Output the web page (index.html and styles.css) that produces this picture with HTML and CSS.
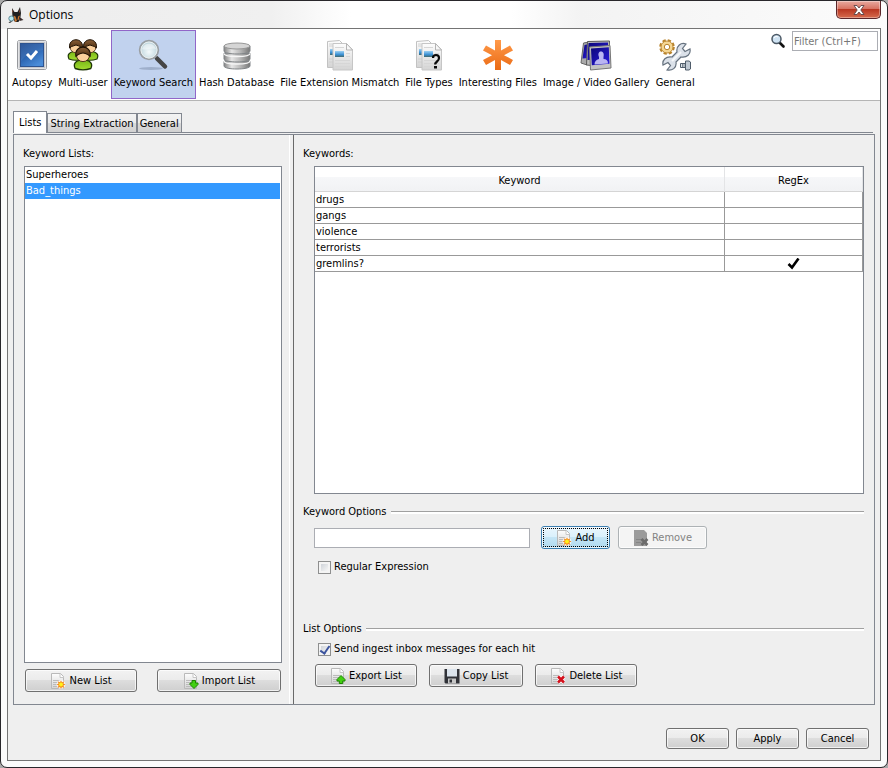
FILE: index.html
```html
<!DOCTYPE html>
<html lang="en">
<head>
  <meta charset="UTF-8" />
  <meta name="viewport" content="width=device-width, initial-scale=1.0" />
  <title>Options</title>
  <link rel="stylesheet" href="styles.css">
</head>
<body>
  <!-- shared icons -->
  <svg class="sprite" width="0" height="0" aria-hidden="true">
    <defs>
      <linearGradient id="paper" x1="0" y1="0" x2="0" y2="1">
        <stop offset="0" stop-color="#fdfdfd"/><stop offset="1" stop-color="#d4d4d4"/>
      </linearGradient>
      <linearGradient id="metal" x1="0" y1="0" x2="1" y2="0">
        <stop offset="0" stop-color="#858585"/><stop offset="0.3" stop-color="#e6e6e6"/><stop offset="0.6" stop-color="#bcbcbc"/><stop offset="1" stop-color="#777"/>
      </linearGradient>
      <linearGradient id="sky" x1="0" y1="0" x2="0" y2="1">
        <stop offset="0" stop-color="#9cd0f2"/><stop offset="0.6" stop-color="#3b90d4"/><stop offset="1" stop-color="#41686b"/>
      </linearGradient>
      <linearGradient id="blue" x1="0" y1="0" x2="0.6" y2="1">
        <stop offset="0" stop-color="#1d4a91"/><stop offset="0.5" stop-color="#2860ad"/><stop offset="1" stop-color="#4a8cd8"/>
      </linearGradient>
      <linearGradient id="orange" x1="0" y1="0" x2="0" y2="1">
        <stop offset="0" stop-color="#ff9a4a"/><stop offset="1" stop-color="#ea6a14"/>
      </linearGradient>
      <linearGradient id="shirt" x1="0" y1="0" x2="0" y2="1">
        <stop offset="0" stop-color="#78b818"/><stop offset="1" stop-color="#a4dc30"/>
      </linearGradient>
      <linearGradient id="hair" x1="0" y1="0" x2="0" y2="1">
        <stop offset="0" stop-color="#8a6038"/><stop offset="1" stop-color="#4c2d10"/>
      </linearGradient>
      <radialGradient id="lens" cx="0.5" cy="0.6" r="0.6">
        <stop offset="0" stop-color="#f4fafb"/><stop offset="1" stop-color="#b4cfd8"/>
      </radialGradient>
      <linearGradient id="night" x1="0" y1="0" x2="1" y2="1">
        <stop offset="0" stop-color="#0c0878"/><stop offset="1" stop-color="#2a1ae0"/>
      </linearGradient>
    </defs>
    <symbol id="doc" viewBox="0 0 16 16">
      <path d="M1.500 .5h9l3 3v12h-12z" fill="url(#paper)" stroke="#b9b9b9"/>
      <path d="M10 .8v3.700h3.500" fill="#fff" stroke="#c6c6c6"/>
      <path d="M3 7.500h7M3 9.500h8M3 11.500h5M3 13.500h6" stroke="#bbb"/>
    </symbol>
    <symbol id="person" viewBox="0 0 18 22">
      <path d="M2 20C0 16 2 13.500 6 12.500h6c4 1 6 3.500 4 7.500q-7 2.500-14 0z" fill="url(#shirt)" stroke="#1e3606" stroke-width="1.200"/>
      <path d="M6.500 12.500q2.500 3.500 5 0v-2h-5z" fill="#f7c68f"/>
      <ellipse cx="9" cy="8.500" rx="5.800" ry="5.300" fill="#fbd09c" stroke="#3c240c" stroke-width=".8"/>
      <path d="M2.600 9C.8-2 17.200-2 15.400 9l-2-1.500Q9 4.500 4.600 7.500z" fill="url(#hair)" stroke="#1f1204"/>
    </symbol>
    <symbol id="pages" viewBox="0 0 28 32">
      <path d="M1.500 2.500l12-1 4 4v23h-16z" fill="url(#paper)" stroke="#c2c2c2"/>
      <path d="M3 5h11M3 7h11M3 20h5M3 23h5" stroke="#d0d0d0"/>
      <path d="M4 10h4v6H4z" fill="url(#sky)"/>
      <path d="M7 4.500h13.500l6 6v20.500H7z" fill="url(#paper)" stroke="#c6c6c6"/>
      <path d="M20.500 4.500v6.500h6z" fill="#f8f8f8" stroke="#b4b4b4"/>
      <path d="M9 8.500h9M20 14.500h4M20 17.500h4M9 21.500h15M9 24.500h15M9 27.500h15" stroke="#d6d6d6"/>
      <path d="M9 12h9v6H9z" fill="url(#sky)"/>
    </symbol>
    <symbol id="star" viewBox="0 0 16 16">
      <circle cx="11" cy="11.500" r="4.500" fill="#fff" opacity=".7"/>
      <path d="M11 7.200l1 2 2.400-1-1 2.400 2.200 1-2.200 1 1 2.400-2.400-1-1 1.900-1-1.900-2.400 1 1-2.400-2-1 2-1-1-2.400 2.400 1z" fill="#f58b1f"/>
      <circle cx="11" cy="11.600" r="2" fill="#fff11b"/>
    </symbol>
  </svg>

  <div class="window">
    <header class="titlebar">
      <svg class="app-icon" viewBox="0 0 16 16" aria-hidden="true">
        <path d="M4 1l2.500 4h3L12 0l1 6-.5 4-2 5H7L4.500 11z" fill="#202020"/>
        <path d="M4.300 2l1 3-1 .5zM11.800 2l.3 3.500-1.100-.3z" fill="#96533a"/>
        <path d="M5.500 8.500l2 1 1.500 4.500-2 1zM12 8.500l-2 1-.5 3.500 1.500-.5z" fill="#c77632"/>
        <path d="M11 9.500l4.500 3.500-4 1z" fill="#392c2c"/>
        <path d="M5 13L1 16" stroke="#555" stroke-width="1.500"/>
        <circle cx="3.300" cy="11.500" r="2.500" fill="#b9eaf2" stroke="#608a98"/>
      </svg>
      <h1 class="title">Options</h1>
      <button class="close" type="button" aria-label="Close">
        <svg viewBox="0 0 12 10"><path d="M1 .5h3l2 2.500 2-2.500h3L7.800 5 11 9.500H8L6 7 4 9.500H1L4.200 5z" fill="#fff" stroke="#5d4548" stroke-width=".9"/></svg>
      </button>
    </header>

    <main class="content">
      <div class="toolbar">
        <nav class="categories">
          <button class="category" type="button">
            <svg viewBox="0 0 32 32">
              <rect x="1.500" y="1.500" width="29" height="29" rx="2" fill="#c6c8cc" stroke="#96989c"/>
              <rect x="2.500" y="2.500" width="27" height="27" fill="none" stroke="#e2e3e6"/>
              <rect x="4.500" y="4.500" width="23" height="23" fill="url(#blue)" stroke="#2d5390"/>
              <path d="M5 5h22v6Q12 13 5 22z" fill="#fff" opacity=".08"/>
              <path d="M11 15l4 4 6-7" fill="none" stroke="#fff" stroke-width="3"/>
            </svg>
            Autopsy
          </button>
          <button class="category" type="button">
            <svg viewBox="0 0 32 32">
              <use href="#person" x="0" y="0" width="18" height="22"/>
              <use href="#person" x="14" y="0" width="18" height="22"/>
              <use href="#person" x="6" y="7" width="20" height="25"/>
            </svg>
            Multi-user
          </button>
          <button class="category selected" type="button">
            <svg viewBox="0 0 32 32">
              <ellipse cx="14" cy="29.500" rx="12" ry="1.500" fill="#8798b4" opacity=".6"/>
              <path d="M17 17l4 3" stroke="#aaa" stroke-width="3"/>
              <path d="M20 19.500l8 8" stroke="#454545" stroke-width="4.500" stroke-linecap="round"/>
              <circle cx="12" cy="11" r="9.300" fill="url(#lens)" stroke="#9a9fa3" stroke-width="1.800"/>
              <circle cx="12" cy="11" r="8" fill="none" stroke="#e9eeee"/>
              <path d="M5 10c2-7 12-7 14 0-5-2-9 2-14 0z" fill="#fff" opacity=".45"/>
            </svg>
            Keyword Search
          </button>
          <button class="category" type="button">
            <svg viewBox="0 0 32 32">
              <g fill="url(#metal)" stroke="#808487">
                <path d="M3 22v5c0 4 26 4 26 0v-5z"/>
                <path d="M3 14v6c0 4 26 4 26 0v-6z"/>
                <path d="M3 7v5c0 4 26 4 26 0V7z"/>
              </g>
              <ellipse cx="16" cy="7" rx="13" ry="3" fill="#d5d5d5" stroke="#969696"/>
              <path d="M3 14.500c0 4 26 4 26 0M3 22c0 4 26 4 26 0" fill="none" stroke="#f6f6f6" stroke-width="1.400"/>
            </svg>
            Hash Database
          </button>
          <button class="category" type="button">
            <svg viewBox="0 0 32 32"><use href="#pages" x="2" y="0" width="28" height="32"/></svg>
            File Extension Mismatch
          </button>
          <button class="category" type="button">
            <svg viewBox="0 0 32 32">
              <use href="#pages" x="2" y="0" width="28" height="32"/>
              <path d="M20 19q0-3 3-3t3 3q0 2-2 3.500t-1.500 3" fill="none" stroke="#080808" stroke-width="2.200"/>
              <rect x="21" y="27" width="3" height="2.500" fill="#080808"/>
            </svg>
            File Types
          </button>
          <button class="category" type="button">
            <svg viewBox="0 0 32 32">
              <path d="M13 1h6v10.500L28 6.500l3 5-9 4.700 9 4.700-3 5-9-5V31h-6V20.900l-9 5-3-5 9-4.700-9-4.700 3-5 9 5z" fill="url(#orange)"/>
            </svg>
            Interesting Files
          </button>
          <button class="category" type="button">
            <svg viewBox="0 0 32 32">
              <path d="M3.500 4L9 3 7 26l-6-2z" fill="#aaa" stroke="#666"/>
              <path d="M4.500 6L9 5v14l-6.500.5z" fill="url(#night)"/>
              <path d="M7.500 2.500l22-.5-1 26-22-2z" fill="#bdbdbd" stroke="#5b5b5b"/>
              <path d="M8.500 4l19.500-.5V20L7.500 21z" fill="url(#night)"/>
              <path d="M9.500 8l20.500-1.500L31 29l-20.500 2z" fill="#c3c3c3" stroke="#777"/>
              <path d="M11 9.500l17.800-1.300.7 16.500-17.700 1.500z" fill="url(#night)"/>
              <path d="M14.500 25.500q0-4.500 4.500-5.500v-2c-3-7 6.500-7.500 4.500 0v2q4.500 0 4.500 4.500z" fill="#b9b5f2"/>
            </svg>
            Image / Video Gallery
          </button>
          <button class="category" type="button">
            <svg viewBox="0 0 32 32">
              <circle cx="8" cy="8" r="6.500" fill="none" stroke="#b8832b" stroke-width="2.600" stroke-dasharray="3.100 2"/>
              <circle cx="8" cy="8" r="6" fill="#f5d794" stroke="#c18d38"/>
              <circle cx="8" cy="8" r="2.700" fill="#fff" stroke="#b8832b"/>
              <path d="M18 13c-1-6 4-10 9-8l-3.500 4.500 2.500 3L31 10c1 5-3 9-9 8l-5 5c1 6-4 9-9 8l3.500-4.500-2.500-3L4 26c-1-5 3-9 9-8z" fill="#dbe1e9" stroke="#66727f" stroke-width="1.200"/>
              <path d="M13 22l9-9" stroke="#f6f8fa" stroke-width="2"/>
              <path d="M21.500 24.500h5v4h-5z" fill="#dfe5ea" stroke="#4f5c6a"/>
              <path d="M26.500 22h3.500l1.500 1v7l-1.500 1h-3.500z" fill="#c0cad4" stroke="#4f5c6a"/>
              <path d="M23.500 25v3M25 25v3" stroke="#4f5c6a" stroke-width=".7"/>
            </svg>
            General
          </button>
        </nav>
        <div class="filter">
          <svg viewBox="0 0 16 16" aria-hidden="true">
            <path d="M9 9l4.500 4.500" stroke="#111" stroke-width="2.600" stroke-linecap="round"/>
            <circle cx="6.500" cy="6" r="4.500" fill="#cfe3f3" stroke="#4b5865" stroke-width="1.500"/>
            <path d="M4 5q2-3 4-1" stroke="#fff" fill="none"/>
          </svg>
          <input type="text" placeholder="Filter (Ctrl+F)" aria-label="Filter">
        </div>
      </div>

      <div class="tabs">
        <button class="tab active" type="button">Lists</button>
        <button class="tab" type="button">String Extraction</button>
        <button class="tab" type="button">General</button>
      </div>

      <div class="panel">
        <section class="lists-pane">
          <h2 id="lists-label">Keyword Lists:</h2>
          <ul class="keyword-lists" aria-labelledby="lists-label">
            <li>Superheroes</li>
            <li class="current">Bad_things</li>
          </ul>
          <div class="list-buttons">
            <button class="btn new-list" type="button">
              <svg viewBox="0 0 16 16"><use href="#doc"/><use href="#star"/></svg>New List
            </button>
            <button class="btn import-list" type="button">
              <svg viewBox="0 0 16 16"><use href="#doc"/><path d="M9 7.500h3.500V10H15v1.500L11 15.500 7 11.500V10h2z" fill="#43cf12" stroke="#1c8500"/></svg>Import List
            </button>
          </div>
        </section>

        <section class="keywords-pane">
          <h2>Keywords:</h2>
          <div class="table-wrap">
            <table>
              <thead>
                <tr><th>Keyword</th><th class="regex">RegEx</th></tr>
              </thead>
              <tbody>
                <tr><td>drugs</td><td></td></tr>
                <tr><td>gangs</td><td></td></tr>
                <tr><td>violence</td><td></td></tr>
                <tr><td>terrorists</td><td></td></tr>
                <tr>
                  <td>gremlins?</td>
                  <td class="mark"><svg viewBox="0 0 14 12" role="img" aria-label="Yes"><path d="M1.500 6l3.500 3.500 6.500-9" fill="none" stroke="#000" stroke-width="2.600"/></svg></td>
                </tr>
              </tbody>
            </table>
          </div>

          <h2 class="divider">Keyword Options</h2>
          <div class="add-row">
            <input class="keyword-input" type="text" aria-label="Keyword">
            <button class="btn add" type="button">
              <svg viewBox="0 0 16 16"><use href="#doc"/><use href="#star"/></svg>Add
            </button>
            <button class="btn remove" type="button" disabled>
              <svg viewBox="0 0 16 16"><path d="M1 0h10l3 3v13H1z" fill="#9b9b9b"/><path d="M3 9.500h6M3 12.500h5" stroke="#858585"/><path d="M8.500 9l6 6M14.500 9l-6 6" stroke="#6c6c6c" stroke-width="2.600"/></svg>Remove
            </button>
          </div>
          <label class="check"><input type="checkbox">Regular Expression</label>

          <h2 class="divider list-options">List Options</h2>
          <label class="check inbox-check"><input type="checkbox" checked>Send ingest inbox messages for each hit</label>
          <div class="action-row">
            <button class="btn" type="button">
              <svg viewBox="0 0 16 16"><use href="#doc"/><path d="M11 7.500l4 4V13h-2.300v2.500H9.300V13H7v-1.500z" fill="#43cf12" stroke="#1c8500"/></svg>Export List
            </button>
            <button class="btn" type="button">
              <svg viewBox="0 0 16 16"><path d="M.5 1h15v14.500h-14l-1-1z" fill="#303238"/><path d="M3 1h10v7.500H3z" fill="#dbe3ec"/><path d="M4 10.500h8v5H4z" fill="#c6c6c6"/><path d="M5.500 11.500h2.500v3H5.500z" fill="#303238"/></svg>Copy List
            </button>
            <button class="btn" type="button">
              <svg viewBox="0 0 16 16"><use href="#doc"/><path d="M8 8.500l6 6M14 8.500l-6 6" stroke="#fff" stroke-width="4"/><path d="M8 8.500l6 6M14 8.500l-6 6" stroke="#d3101c" stroke-width="2.600"/></svg>Delete List
            </button>
          </div>
        </section>
      </div>

      <footer class="footer">
        <button class="btn" type="button">OK</button>
        <button class="btn" type="button">Apply</button>
        <button class="btn" type="button">Cancel</button>
      </footer>
    </main>
  </div>
</body>
</html>
```
FILE: styles.css
```css
* {
  box-sizing: border-box;
}
body {
  margin: 0;
  background: #a9a9a9;
  color: #000;
  font-family: Tahoma, "DejaVu Sans Condensed", "Noto Sans", sans-serif;
  font-size: 11px;
  line-height: 16px;
}
button, input {
  font: inherit;
  color: inherit;
}
h1, h2 {
  margin: 0;
  font-size: 11px;
  font-weight: normal;
}
.sprite {
  position: absolute;
}

/* Window frame */
.window {
  display: flex;
  flex-direction: column;
  min-height: 100vh;
  padding: 0 6px 6px;
  border: 1px solid #29272b;
  border-radius: 7px;
  background: linear-gradient(to right, #ededed 0, #f0f0f0 270px, #fff 350px, #fff 510px, #f3f3f3 580px, #fcfcfc 100%) top / 100% 28px no-repeat, #fbfbfb;
}
.titlebar {
  display: flex;
  align-items: center;
  height: 27px;
}
.app-icon {
  width: 16px;
  height: 16px;
  margin-left: 1px;
}
.title {
  flex: 1;
  margin-left: 5px;
  font-family: "Open Sans", "Noto Sans", sans-serif;
  font-size: 12px;
}
.close {
  align-self: flex-start;
  display: flex;
  align-items: center;
  justify-content: center;
  width: 45px;
  height: 18px;
  padding: 0;
  border: 1px solid #5b262a;
  border-top: 0;
  border-radius: 0 0 5px 5px;
  background: linear-gradient(#e8aaa0, #d6705f 48%, #b93722 50%, #d66b4e);
  box-shadow: inset 0 0 0 1px rgba(255, 255, 255, 0.35);
}
.close svg {
  width: 12px;
  height: 10px;
}
.content {
  flex: 1;
  display: flex;
  flex-direction: column;
  border: 1px solid #747474;
  background: #efefef;
}

/* Toolbar */
.toolbar {
  display: flex;
  justify-content: space-between;
  align-items: flex-start;
  padding: 1px 2px 1px 1px;
  border-bottom: 1px solid #b5b5b5;
  background: #fff;
}
.categories {
  display: flex;
}
.category {
  display: flex;
  flex-direction: column;
  align-items: center;
  gap: 4px;
  height: 69px;
  padding: 8px 2px 0;
  border: 1px solid transparent;
  background: none;
  white-space: nowrap;
}
.category svg {
  width: 32px;
  height: 32px;
}
.category.selected {
  border-color: #9166c8;
  background: #c1d2ee;
}
.filter {
  display: flex;
  align-items: center;
  gap: 6px;
}
.filter svg {
  width: 16px;
  height: 16px;
}
.filter input {
  width: 86px;
  height: 20px;
  margin-top: 1px;
  padding: 0 1px;
  border: 1px solid #abadb3;
  background: #fff;
}
.filter input::placeholder {
  color: #777;
}

/* Tabs */
.tabs {
  display: flex;
  align-items: flex-end;
  margin: 10px 7px 0 5px;
  border-bottom: 1px solid #828790;
}
.tab {
  height: 19px;
  padding: 2px 2px 0;
  border: 1px solid #828790;
  border-bottom: 0;
  background: linear-gradient(#f3f3f3, #ececec 50%, #dadada 52%, #d2d2d2);
}
.tab.active {
  height: 22px;
  margin-bottom: -1px;
  padding: 0 5px;
  background: #fff;
}

/* Tab panel */
.panel {
  flex: 1;
  display: flex;
  margin: 1px 5px 0;
  border: 1px solid #828790;
}
.lists-pane {
  flex: 0 0 276px;
  display: flex;
  flex-direction: column;
  padding: 11px 7px 12px 10px;
  border-right: 1px solid #fff;
}
.lists-pane h2 {
  margin-left: -1px;
}
.keyword-lists {
  flex: 1;
  margin: 4px 0 6px;
  padding: 0 1px 0 0;
  border: 1px solid #828790;
  background: #fff;
  list-style: none;
}
.keyword-lists li {
  padding-left: 1px;
}
.keyword-lists .current {
  background: #3399ff;
  color: #fff;
}
.list-buttons {
  display: flex;
  justify-content: space-between;
  padding: 0 1px;
}
.new-list {
  width: 112px;
}
.import-list {
  width: 124px;
}
.keywords-pane {
  flex: 1;
  display: flex;
  flex-direction: column;
  margin-left: 3px;
  padding: 11px 10px 17px 9px;
  border-left: 1px solid #696969;
}

/* Keyword table */
.table-wrap {
  flex: 1;
  margin: 4px 0 10px 11px;
  border: 1px solid #828790;
  background: #fff;
}
table {
  width: 100%;
  border-collapse: separate;
  border-spacing: 0;
}
th {
  height: 25px;
  padding: 3px 0 0;
  border-right: 1px solid #e3e4e6;
  border-bottom: 1px solid #d5d5d5;
  background: linear-gradient(#fff 40%, #f6f7f9 42%, #f1f2f4);
  font-weight: normal;
}
th.regex {
  width: 138px;
}
td {
  height: 16px;
  padding: 0 1px;
  border-right: 1px solid #999;
  border-bottom: 1px solid #999;
  line-height: 15px;
}
.mark {
  text-align: center;
}
.mark svg {
  display: block;
  width: 14px;
  height: 12px;
  margin: 0 auto;
}

/* Options */
.divider {
  display: flex;
  align-items: center;
  gap: 4px;
}
.divider::after {
  content: "";
  flex: 1;
  height: 2px;
  border-top: 1px solid #a0a0a0;
  background: #fff;
}
.add-row {
  display: flex;
  align-items: center;
  margin: 6px 0 10px 11px;
}
.keyword-input {
  flex: 0 1 216px;
  min-width: 80px;
  height: 20px;
  margin-right: 11px;
  padding: 0 2px;
  border: 1px solid #abadb3;
  background: #fff;
}
.btn {
  display: flex;
  align-items: center;
  justify-content: center;
  gap: 3px;
  height: 23px;
  padding: 0 14px;
  border: 1px solid #707070;
  border-radius: 3px;
  background: linear-gradient(#f2f2f2, #ebebeb 48%, #dddddd 50%, #cfcfcf);
  box-shadow: inset 0 0 0 1px rgba(255, 255, 255, 0.7);
  white-space: nowrap;
}
.btn svg {
  flex: none;
  width: 16px;
  height: 16px;
}
.btn.add {
  width: 69px;
  margin-right: 8px;
  border-color: #3c7fb1;
  background: linear-gradient(#eaf6fd, #d9f0fc 48%, #c4e5f6 50%, #afd9ee);
  outline: 1px dotted #000;
  outline-offset: -3px;
}
.btn.remove {
  width: 89px;
  border-color: #adb2b5;
  background: #f4f4f4;
  color: #838383;
}
.check {
  display: flex;
  align-items: center;
  gap: 3px;
  margin-left: 15px;
}
.check input {
  appearance: none;
  display: grid;
  place-items: center;
  width: 13px;
  height: 13px;
  margin: 0;
  border: 1px solid #8e8f8f;
  background: linear-gradient(135deg, #cfd3d9, #f6f6f6) content-box, #f4f4f4;
  padding: 2px;
}
.check input:checked::before {
  content: "";
  width: 4px;
  height: 8px;
  margin-top: -2px;
  border: solid #3c549e;
  border-width: 0 2px 2px 0;
  transform: rotate(35deg);
}
.list-options {
  margin-top: 46px;
}
.inbox-check {
  margin-top: 4px;
}
.action-row {
  display: flex;
  gap: 12px;
  margin: 7px 0 0 12px;
}

/* Dialog buttons */
.footer {
  display: flex;
  justify-content: flex-end;
  gap: 7px;
  padding: 23px 11px 11px;
}
.footer .btn {
  width: 63px;
  height: 21px;
  padding: 0;
}
```
